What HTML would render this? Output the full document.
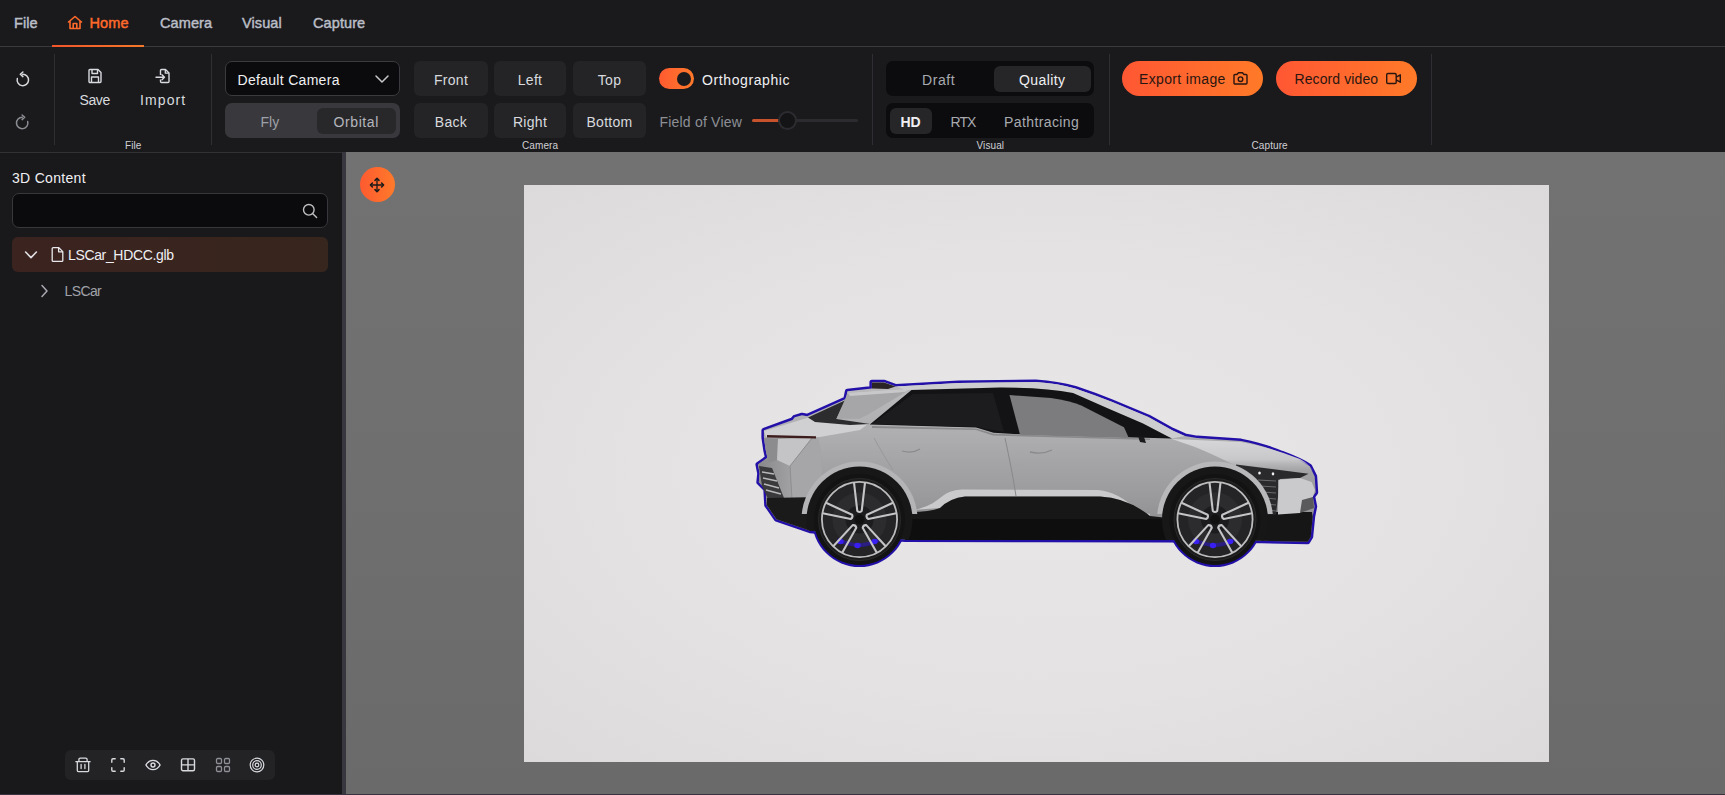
<!DOCTYPE html>
<html><head><meta charset="utf-8">
<style>
*{margin:0;padding:0;box-sizing:border-box}
html,body{width:1725px;height:795px;overflow:hidden;background:#1a1a1d;font-family:"Liberation Sans",sans-serif;}
.a{position:absolute}
.t{position:absolute;white-space:nowrap;line-height:1;font-size:14px;color:#d8dade}
.btn{position:absolute;background:#242427;border-radius:6px}
.sep{position:absolute;width:1px;background:#2f2f33}
.lbl{position:absolute;white-space:nowrap;line-height:1;font-size:10px;color:#d0d0d4}
svg{position:absolute;overflow:visible}
</style></head><body>
<!-- top menu -->
<div class="a" style="left:0;top:0;width:1725px;height:46px;background:#1a1a1d"></div>
<div class="a" style="left:0;top:46px;width:1725px;height:1px;background:#3a3a3e"></div>
<div class="a" style="left:52px;top:45px;width:92px;height:2px;background:linear-gradient(90deg,#f2552a,#f5792a)"></div>
<div class="t" style="left:14px;top:15.8px;font-size:14.5px;font-weight:normal;-webkit-text-stroke:0.45px #babec6;letter-spacing:0.1px;color:#babec6">File</div>
<svg style="left:67px;top:15px" width="16" height="15" viewBox="0 0 16 15"><path d="M1.5 7 L8 1.5 L14.5 7 M3 5.8 V13.5 H13 V5.8 M6.2 13.5 V8.5 H9.8 V13.5" fill="none" stroke="#ff6a2a" stroke-width="1.6" stroke-linejoin="round" stroke-linecap="round"/></svg>
<div class="t" style="left:89.5px;top:15.8px;font-size:14.5px;font-weight:normal;-webkit-text-stroke:0.45px #ff6a2a;letter-spacing:0.1px;color:#ff6a2a">Home</div>
<div class="t" style="left:160px;top:15.8px;font-size:14.5px;font-weight:normal;-webkit-text-stroke:0.45px #babec6;letter-spacing:0.1px;color:#babec6">Camera</div>
<div class="t" style="left:242px;top:15.8px;font-size:14.5px;font-weight:normal;-webkit-text-stroke:0.45px #babec6;letter-spacing:0.1px;color:#babec6">Visual</div>
<div class="t" style="left:313px;top:15.8px;font-size:14.5px;font-weight:normal;-webkit-text-stroke:0.45px #babec6;letter-spacing:0.1px;color:#babec6">Capture</div>

<!-- toolbar separators -->
<div class="sep" style="left:54px;top:54px;height:91px"></div>
<div class="sep" style="left:211px;top:54px;height:91px"></div>
<div class="sep" style="left:872px;top:54px;height:91px"></div>
<div class="sep" style="left:1109px;top:54px;height:91px"></div>
<div class="sep" style="left:1431px;top:54px;height:91px"></div>


<!-- undo/redo -->
<svg style="left:15px;top:71px" width="16" height="16" viewBox="0 0 16 16"><path d="M2.3 7.6 A5.7 5.7 0 1 0 7.7 3.3" fill="none" stroke="#d8dade" stroke-width="1.5" stroke-linecap="round"/><path d="M7.9 1 L5.3 3.3 L7.9 5.6" fill="none" stroke="#d8dade" stroke-width="1.5" stroke-linecap="round" stroke-linejoin="round"/></svg>
<svg style="left:13.5px;top:113.5px" width="16" height="16" viewBox="0 0 16 16"><g transform="translate(16,0) scale(-1,1)"><path d="M2.3 7.6 A5.7 5.7 0 1 0 7.7 3.3" fill="none" stroke="#8c8d92" stroke-width="1.5" stroke-linecap="round"/><path d="M7.9 1 L5.3 3.3 L7.9 5.6" fill="none" stroke="#8c8d92" stroke-width="1.5" stroke-linecap="round" stroke-linejoin="round"/></g></svg>
<!-- save / import -->
<svg style="left:87px;top:68px" width="16" height="16" viewBox="0 0 16 16"><path d="M2 2.5 A1 1 0 0 1 3 1.5 H11 L14 4.5 V13.5 A1 1 0 0 1 13 14.5 H3 A1 1 0 0 1 2 13.5 Z" fill="none" stroke="#d8dade" stroke-width="1.4" stroke-linejoin="round"/><path d="M5 1.8 V5.5 H10.5 V1.8 M4.5 14.2 V9 H11.5 V14.2" fill="none" stroke="#d8dade" stroke-width="1.4" stroke-linejoin="round"/></svg>
<div class="t" style="left:79.5px;top:93px;letter-spacing:-0.4px">Save</div>
<svg style="left:155px;top:68px" width="16" height="16" viewBox="0 0 16 16"><path d="M5.5 11.5 V13.5 A1 1 0 0 0 6.5 14.5 H13 A1 1 0 0 0 14 13.5 V5 L10.5 1.5 H6.5 A1 1 0 0 0 5.5 2.5 V7" fill="none" stroke="#d8dade" stroke-width="1.4" stroke-linejoin="round"/><path d="M10.3 1.8 V5.2 H13.8" fill="none" stroke="#d8dade" stroke-width="1.3" stroke-linejoin="round"/><path d="M1 9.3 H9.5 M7 6.8 L9.5 9.3 L7 11.8" fill="none" stroke="#d8dade" stroke-width="1.4" stroke-linecap="round" stroke-linejoin="round"/></svg>
<div class="t" style="left:140px;top:93px;letter-spacing:1.1px">Import</div>
<div class="lbl" style="left:125px;top:140.5px;letter-spacing:0.1px">File</div>

<!-- camera -->
<div class="a" style="left:225px;top:61px;width:175px;height:35px;background:#0b0b0d;border:1px solid #3a3a3f;border-radius:7px"></div>
<div class="t" style="left:237.5px;top:73px;letter-spacing:0.3px;color:#f0f0f2">Default Camera</div>
<svg style="left:374px;top:74px" width="16" height="10" viewBox="0 0 16 10"><path d="M2 2 L8 8 L14 2" fill="none" stroke="#c8c8cc" stroke-width="1.5" stroke-linecap="round" stroke-linejoin="round"/></svg>
<div class="a" style="left:225px;top:103px;width:175px;height:35px;background:#38383d;border-radius:7px"></div>
<div class="a" style="left:317px;top:108px;width:79px;height:26px;background:#28282b;border-radius:6px"></div>
<div class="t" style="left:260.5px;top:115px;color:#9fa1a8">Fly</div>
<div class="t" style="left:333.5px;top:115px;letter-spacing:0.6px;color:#b4b6bc">Orbital</div>

<div class="btn" style="left:414px;top:61px;width:74px;height:35px"></div>
<div class="btn" style="left:494px;top:61px;width:72px;height:35px"></div>
<div class="btn" style="left:573px;top:61px;width:73px;height:35px"></div>
<div class="btn" style="left:414px;top:103px;width:74px;height:35px"></div>
<div class="btn" style="left:494px;top:103px;width:72px;height:35px"></div>
<div class="btn" style="left:573px;top:103px;width:73px;height:35px"></div>
<div class="t" style="left:414px;width:74px;text-align:center;top:73px;letter-spacing:0.3px">Front</div>
<div class="t" style="left:494px;width:72px;text-align:center;top:73px;letter-spacing:0.3px">Left</div>
<div class="t" style="left:573px;width:73px;text-align:center;top:73px;letter-spacing:0.3px">Top</div>
<div class="t" style="left:414px;width:74px;text-align:center;top:115px;letter-spacing:0.3px">Back</div>
<div class="t" style="left:494px;width:72px;text-align:center;top:115px;letter-spacing:0.3px">Right</div>
<div class="t" style="left:573px;width:73px;text-align:center;top:115px;letter-spacing:0.3px">Bottom</div>
<div class="lbl" style="left:522px;top:140.5px;letter-spacing:0.1px">Camera</div>

<div class="a" style="left:659px;top:68px;width:35px;height:21px;border-radius:11px;background:linear-gradient(90deg,#ff5a30,#ff7a2a)"></div>
<div class="a" style="left:677px;top:71.5px;width:14px;height:14px;border-radius:50%;background:#1b1b1e"></div>
<div class="t" style="left:702px;top:73px;letter-spacing:0.6px;color:#f0f0f2">Orthographic</div>
<div class="t" style="left:659.5px;top:115px;letter-spacing:0.2px;color:#8e9096">Field of View</div>
<div class="a" style="left:752px;top:119px;width:106px;height:3px;border-radius:2px;background:#2c2c30"></div>
<div class="a" style="left:752px;top:119px;width:30px;height:3px;border-radius:2px;background:#c8522c"></div>
<div class="a" style="left:777.5px;top:111px;width:19px;height:19px;border-radius:50%;background:#141416;border:2px solid #2c2c30"></div>

<!-- visual -->
<div class="a" style="left:886px;top:61px;width:208px;height:35px;background:#0c0c0e;border-radius:7px"></div>
<div class="a" style="left:994px;top:66px;width:97px;height:26px;background:#262629;border-radius:6px"></div>
<div class="t" style="left:922px;top:73px;letter-spacing:0.6px;color:#a8aab0">Draft</div>
<div class="t" style="left:1019px;top:73px;letter-spacing:0.4px;color:#f0f0f2">Quality</div>
<div class="a" style="left:886px;top:103px;width:208px;height:35px;background:#0c0c0e;border-radius:7px"></div>
<div class="a" style="left:889.5px;top:108px;width:42px;height:26px;background:#262629;border-radius:6px"></div>
<div class="t" style="left:900.5px;top:115px;font-weight:bold;color:#f0f0f2">HD</div>
<div class="t" style="left:950.5px;top:115px;letter-spacing:-0.9px;color:#a8aab0">RTX</div>
<div class="t" style="left:1004px;top:115px;letter-spacing:0.4px;color:#a8aab0">Pathtracing</div>
<div class="lbl" style="left:976.5px;top:140.5px;letter-spacing:0.1px">Visual</div>

<!-- capture -->
<div class="a" style="left:1122px;top:61px;width:141px;height:35px;border-radius:18px;background:linear-gradient(90deg,#ff5733,#ff7a28)"></div>
<div class="t" style="left:1139px;top:72px;letter-spacing:0.35px;color:#2a1610">Export image</div>
<svg style="left:1232px;top:71px" width="17" height="15" viewBox="0 0 17 15"><path d="M2 4.5 A1 1 0 0 1 3 3.5 H5 L6.5 1.8 H10.5 L12 3.5 H14 A1 1 0 0 1 15 4.5 V12 A1 1 0 0 1 14 13 H3 A1 1 0 0 1 2 12 Z" fill="none" stroke="#2a1610" stroke-width="1.4" stroke-linejoin="round"/><circle cx="8.5" cy="8.2" r="2.3" fill="none" stroke="#2a1610" stroke-width="1.4"/></svg>
<div class="a" style="left:1276px;top:61px;width:141px;height:35px;border-radius:18px;background:linear-gradient(90deg,#ff5733,#ff7a28)"></div>
<div class="t" style="left:1294.5px;top:72px;letter-spacing:0.1px;color:#2a1610">Record video</div>
<svg style="left:1385px;top:71px" width="17" height="15" viewBox="0 0 17 15"><rect x="1.7" y="2.5" width="9.5" height="10" rx="1.3" fill="none" stroke="#2a1610" stroke-width="1.4"/><path d="M11.2 6.2 L15.3 3.8 V11.2 L11.2 8.8" fill="none" stroke="#2a1610" stroke-width="1.4" stroke-linejoin="round"/></svg>
<div class="lbl" style="left:1251.5px;top:140.5px;letter-spacing:0.1px">Capture</div>


<!-- left panel -->
<div class="a" style="left:0;top:152px;width:342px;height:642px;background:#19191c;border-top:1px solid #323236"></div>
<div class="a" style="left:342px;top:152px;width:4px;height:642px;background:#38363f"></div>


<div class="t" style="left:12px;top:170.5px;letter-spacing:0.3px;color:#f0f0f2">3D Content</div>
<div class="a" style="left:12px;top:193px;width:316px;height:35px;background:#0b0b0d;border:1px solid #38383c;border-radius:7px"></div>
<svg style="left:301px;top:202px" width="18" height="18" viewBox="0 0 18 18"><circle cx="7.8" cy="7.8" r="5.3" fill="none" stroke="#c0c0c4" stroke-width="1.4"/><path d="M11.8 11.8 L15.6 15.6" stroke="#c0c0c4" stroke-width="1.4" stroke-linecap="round"/></svg>
<div class="a" style="left:12px;top:237px;width:316px;height:35px;border-radius:6px;background:linear-gradient(90deg,#3b2320,#37261d)"></div>
<svg style="left:23px;top:249px" width="16" height="12" viewBox="0 0 16 12"><path d="M2.6 3 L8 8.6 L13.4 3" fill="none" stroke="#e0e0e4" stroke-width="1.6" stroke-linecap="round" stroke-linejoin="round"/></svg>
<svg style="left:50px;top:246px" width="15" height="17" viewBox="0 0 15 17"><path d="M2.2 2.6 A1 1 0 0 1 3.2 1.6 H8.8 L12.8 5.6 V14.4 A1 1 0 0 1 11.8 15.4 H3.2 A1 1 0 0 1 2.2 14.4 Z M8.6 1.8 V5.8 H12.6" fill="none" stroke="#e8e8ec" stroke-width="1.3" stroke-linejoin="round"/></svg>
<div class="t" style="left:68px;top:248px;letter-spacing:-0.35px;color:#f0f0f2">LSCar_HDCC.glb</div>
<svg style="left:38px;top:283px" width="12" height="16" viewBox="0 0 12 16"><path d="M4 2.5 L9 8 L4 13.5" fill="none" stroke="#a8aab0" stroke-width="1.5" stroke-linecap="round" stroke-linejoin="round"/></svg>
<div class="t" style="left:64.5px;top:283.5px;letter-spacing:-0.6px;color:#a0a2a8">LSCar</div>

<div class="a" style="left:65px;top:750px;width:210px;height:30px;background:#232326;border-radius:6px"></div>
<svg style="left:75px;top:757px" width="16" height="16" viewBox="0 0 16 16"><path d="M3.9 4.3 V2.4 A1.3 1.3 0 0 1 5.2 1.1 H10.8 A1.3 1.3 0 0 1 12.1 2.4 V4.3 M0.9 4.7 H15.1 M2.3 4.7 V13.5 A1.1 1.1 0 0 0 3.4 14.6 H12.6 A1.1 1.1 0 0 0 13.7 13.5 V4.7 M6.1 7.3 V11.6 M9.9 7.3 V11.6" fill="none" stroke="#d8dade" stroke-width="1.3" stroke-linecap="round" stroke-linejoin="round"/></svg>
<svg style="left:110px;top:757px" width="16" height="16" viewBox="0 0 16 16"><path d="M1.8 5.2 V3 A1.2 1.2 0 0 1 3 1.8 H5.2 M10.8 1.8 H13 A1.2 1.2 0 0 1 14.2 3 V5.2 M14.2 10.8 V13 A1.2 1.2 0 0 1 13 14.2 H10.8 M5.2 14.2 H3 A1.2 1.2 0 0 1 1.8 13 V10.8" fill="none" stroke="#d8dade" stroke-width="1.4" stroke-linecap="round" stroke-linejoin="round"/></svg>
<svg style="left:145px;top:757px" width="16" height="16" viewBox="0 0 16 16"><path d="M0.9 8 C3 4.2 5.4 3.4 8 3.4 C10.6 3.4 13 4.2 15.1 8 C13 11.8 10.6 12.6 8 12.6 C5.4 12.6 3 11.8 0.9 8 Z" fill="none" stroke="#d8dade" stroke-width="1.4" stroke-linejoin="round"/><circle cx="8" cy="8" r="2" fill="none" stroke="#d8dade" stroke-width="1.4"/></svg>
<svg style="left:180px;top:757px" width="16" height="16" viewBox="0 0 16 16"><rect x="1.5" y="1.9" width="13" height="11.9" rx="1.5" fill="none" stroke="#d8dade" stroke-width="1.4"/><path d="M8 1.9 V13.8 M1.5 7.85 H14.5" stroke="#d8dade" stroke-width="1.4"/></svg>
<svg style="left:215px;top:757px" width="16" height="16" viewBox="0 0 16 16"><rect x="1.5" y="1.5" width="5" height="5" rx="1.2" fill="none" stroke="#8e9096" stroke-width="1.3"/><rect x="9.5" y="1.5" width="5" height="5" rx="1.2" fill="none" stroke="#8e9096" stroke-width="1.3"/><rect x="1.5" y="9.5" width="5" height="5" rx="1.2" fill="none" stroke="#8e9096" stroke-width="1.3"/><rect x="9.5" y="9.5" width="5" height="5" rx="1.2" fill="none" stroke="#8e9096" stroke-width="1.3"/></svg>
<svg style="left:249px;top:757px" width="16" height="16" viewBox="0 0 16 16"><circle cx="8" cy="8" r="6.8" fill="none" stroke="#d8dade" stroke-width="1.2"/><circle cx="8" cy="8" r="4.3" fill="none" stroke="#d8dade" stroke-width="1.2"/><circle cx="8" cy="8" r="1.8" fill="none" stroke="#d8dade" stroke-width="1.2"/></svg>


<!-- viewport -->
<div class="a" style="left:346px;top:152px;width:1379px;height:642px;background:linear-gradient(180deg,#727272,#6f6f6f 50%,#6a6a6a)"></div>
<div class="a" style="left:0;top:794px;width:1725px;height:1px;background:#36323e"></div>
<div class="a" style="left:524px;top:185px;width:1025px;height:577px;background:radial-gradient(ellipse at 50% 50%,#e8e6e6 0%,#e4e2e2 55%,#dcdada 100%)"></div>


<div class="a" style="left:360px;top:167px;width:35px;height:35px;border-radius:50%;background:linear-gradient(90deg,#ff5a30,#ff7a2a)"></div>
<svg style="left:368px;top:175.5px" width="18" height="18" viewBox="0 0 18 18"><path d="M9 2.6 V15.4 M2.6 9 H15.4" stroke="#1a1a1a" stroke-width="1.3"/><path d="M7 4.4 L9 2.4 L11 4.4 M7 13.6 L9 15.6 L11 13.6 M4.4 7 L2.4 9 L4.4 11 M13.6 7 L15.6 9 L13.6 11" fill="none" stroke="#1a1a1a" stroke-width="1.5" stroke-linecap="round" stroke-linejoin="round"/></svg>


<svg id="car" style="left:0;top:0" width="1725" height="795" viewBox="0 0 1725 795">
<defs>
<linearGradient id="bodyg" x1="0" y1="380" x2="0" y2="540" gradientUnits="userSpaceOnUse">
<stop offset="0" stop-color="#bcbcbe"/><stop offset="0.38" stop-color="#acacae"/><stop offset="0.52" stop-color="#a4a4a6"/><stop offset="0.7" stop-color="#9c9c9e"/><stop offset="1" stop-color="#8a8a8c"/>
</linearGradient>
<linearGradient id="rearg" x1="760" y1="0" x2="830" y2="0" gradientUnits="userSpaceOnUse">
<stop offset="0" stop-color="#8a8a8c"/><stop offset="0.5" stop-color="#a4a4a6"/><stop offset="1" stop-color="#9c9c9e"/>
</linearGradient>
<clipPath id="topclip"><rect x="0" y="0" width="1725" height="514"/></clipPath>
<clipPath id="bodyclip"><path d="M776.4 519.2 L766.7 505 L765.8 489.3 L758.8 482.3 L759.7 473.4 L757.9 464.6 L767.4 457.8 L765.7 450 L763.9 437.6 L763.9 430.3 L792.6 419.9 L794.7 417.3 L802 415.2 L807.2 416.2 L845.8 399 L847.4 391.2 L871.9 388.6 L871.9 382.3 L884.4 382.3 L895.9 386.5 L958.7 383 L1035.7 382 Q1058 383.5 1075.2 388.4 Q1095 395 1111.7 401.8 L1148.3 417 L1172.6 430.4 L1184.8 435.9 L1197 438.1 L1241 441.1 Q1265 446 1281.5 453.2 Q1300 460 1309.7 466.3 L1314.7 476.4 L1315.7 492.4 L1312.7 496.5 L1314.7 506.5 L1312.7 516.6 L1310.7 536.7 L1307.7 541.8 L1261.4 540.7 L1168 540 L1040 539.7 L905 539.5 L810 530.7 Z"/></clipPath>
<linearGradient id="hoodg" x1="0" y1="440" x2="0" y2="472" gradientUnits="userSpaceOnUse"><stop offset="0" stop-color="#d6d6d8"/><stop offset="0.6" stop-color="#c8c8ca"/><stop offset="1" stop-color="#b4b4b6" stop-opacity="0"/></linearGradient>
</defs>
<path d="M776.4 519.2 L766.7 505 L765.8 489.3 L758.8 482.3 L759.7 473.4 L757.9 464.6 L767.4 457.8 L765.7 450 L763.9 437.6 L763.9 430.3 L792.6 419.9 L794.7 417.3 L802 415.2 L807.2 416.2 L845.8 399 L847.4 391.2 L871.9 388.6 L871.9 382.3 L884.4 382.3 L895.9 386.5 L958.7 383 L1035.7 382 Q1058 383.5 1075.2 388.4 Q1095 395 1111.7 401.8 L1148.3 417 L1172.6 430.4 L1184.8 435.9 L1197 438.1 L1241 441.1 Q1265 446 1281.5 453.2 Q1300 460 1309.7 466.3 L1314.7 476.4 L1315.7 492.4 L1312.7 496.5 L1314.7 506.5 L1312.7 516.6 L1310.7 536.7 L1307.7 541.8 L1261.4 540.7 L1168 540 L1040 539.7 L905 539.5 L810 530.7 Z" fill="#2210a8" stroke="#2210a8" stroke-width="5" stroke-linejoin="round"/>
<circle cx="859.5" cy="519.5" r="47.5" fill="#2210a8"/>
<circle cx="1215" cy="519.5" r="47.5" fill="#2210a8"/>
<path d="M776.4 519.2 L766.7 505 L765.8 489.3 L758.8 482.3 L759.7 473.4 L757.9 464.6 L767.4 457.8 L765.7 450 L763.9 437.6 L763.9 430.3 L792.6 419.9 L794.7 417.3 L802 415.2 L807.2 416.2 L845.8 399 L847.4 391.2 L871.9 388.6 L871.9 382.3 L884.4 382.3 L895.9 386.5 L958.7 383 L1035.7 382 Q1058 383.5 1075.2 388.4 Q1095 395 1111.7 401.8 L1148.3 417 L1172.6 430.4 L1184.8 435.9 L1197 438.1 L1241 441.1 Q1265 446 1281.5 453.2 Q1300 460 1309.7 466.3 L1314.7 476.4 L1315.7 492.4 L1312.7 496.5 L1314.7 506.5 L1312.7 516.6 L1310.7 536.7 L1307.7 541.8 L1261.4 540.7 L1168 540 L1040 539.7 L905 539.5 L810 530.7 Z" fill="url(#bodyg)"/>
<!-- spoiler -->
<path d="M872 388.6 L872 382.5 L884 382.5 L895.5 386.5 L888 389 Z" fill="#2a2426"/>
<!-- rear fascia -->
<path d="M764 438 L818 438 Q826 470 818 505 L776.4 519.2 L766.7 505 L765.8 489.3 L758.8 482.3 L759.7 473.4 L757.9 464.6 L767.4 457.8 L765.7 450 Z" fill="url(#rearg)"/>
<path d="M766 439 L778 439 L777 460 L768 463 Z" fill="#8c8c8e"/>
<path d="M778 439 L812 438 L790 466 L777 460 Z" fill="#c4c4c6"/>
<path d="M812 438 L790 466 L792 500 L818 500 Q826 470 818 438 Z" fill="#a6a6a8"/>
<path d="M812 438 L790 466 L792 500" fill="none" stroke="#8e8e90" stroke-width="1"/>
<path d="M759 466 L772 468 L784 498 L768 499 L762 486 Z" fill="#3a3a3c"/>
<path d="M762 472 L774 474 M763 478 L777 481 M764 484 L779 488 M766 490 L781 494" stroke="#b8b8ba" stroke-width="1.4"/>
<!-- rear deck highlight -->
<path d="M764 431 L807 418 L868 424 L860 430 L820 437 L766 437 Z" fill="#d0d0d2"/>
<path d="M767 435 L816 436.3 L816 438.6 L767 437.6 Z" fill="#3c1c1c"/>
<!-- rear glass dark -->
<path d="M808 417.5 L845.8 400 L836.4 419 L870 424 L850 425 L815 422 Z" fill="#2c2c2e"/>
<!-- C pillar fin -->
<path d="M847.9 392.7 L911.5 388.6 L867.7 414.7 L859.4 418.8 L836.4 418.8 Z" fill="#a6a6a8"/>
<path d="M847.9 392.7 L911.5 388.6 L905 392 L850 396 Z" fill="#c8c8ca"/>
<!-- roof highlight -->
<path d="M895.9 386.5 L958.7 383 L1035.7 382 Q1058 383.5 1075.2 388.4 Q1095 395 1111.7 401.8 L1148.3 417 L1172.6 430.4 L1184.8 435.9 L1172 438.5 L1165 435 L1143 423.5 L1107 408 L1073 393 Q1045 387.5 1000 387.6 L905 390 Z" fill="#cdcdcf"/>
<!-- window frame black -->
<path d="M869.8 424.5 L911.5 390 L1000 387.6 Q1045 387.5 1073 393 L1107 408 L1143 423.5 L1165 435 L1172 438.5 L1024 434.5 L993.5 432.8 L976 427.6 Z" fill="#131315"/>
<!-- rear side window -->
<path d="M872 424 L913 394 L993 393 L1004 432 L976 427 Z" fill="#1c1b1d"/>
<!-- front side window light -->
<path d="M1009.5 395 L1050.9 398.1 Q1070 401 1081.3 405.4 L1124 427.3 L1128.8 438 L1020 434.7 Z" fill="#7c7c7e"/>
<!-- sill line -->
<path d="M872 426 L976 428.5 L993.5 433.8 L1150 438.5 L1150 440 L993 435.5 L976 430 L872 428 Z" fill="#8a8a8c"/>
<!-- mirror -->
<path d="M1138 436 L1144 437 L1146 443 L1140 442 Z" fill="#1a1a1c"/>
<!-- hood/front -->
<path d="M1172 439 L1241 442 Q1270 447 1300 459 Q1310 464 1315 474 L1240 468 Q1215 455 1195 447 Z" fill="url(#hoodg)"/>
<!-- shoulder highlight -->

<!-- lower door blade -->
<path d="M912 510 Q928 508 940 498 Q948 490 962 489.5 L1098 490 Q1120 492 1138 512 L1150 514 L1150 516 Q1128 498 1100 496.5 L965 496.5 Q950 498 940 508 Z" fill="#cacacc"/>
<!-- black skirt -->
<path d="M905 539.5 L910 512 Q930 512 940 508 Q950 498 965 496.5 L1100 496.5 Q1128 498 1150 516 L1168 518 L1168 540 L1040 539.7 Z" fill="#171718"/>
<path d="M905 519 L1168 519 L1168 540 L905 540 Z" fill="#0e0e0f"/>
<!-- rear lower black -->
<path d="M776.4 519.2 L766.7 505 L767 498 L820 497 L824 531 L810 530.7 Z" fill="#1a1a1b"/>
<!-- front lower black -->
<path d="M1258 512 L1312 512 L1312.7 516.6 L1310.7 536.7 L1307.7 541.8 L1261.4 540.7 Z" fill="#161617"/>
<!-- front grille -->
<path d="M1236 464.5 L1308.5 473.8 L1300 478 L1280 479 L1276 514.6 L1266 514.6 Q1258 488 1236 470 Z" fill="#2a2a2c"/>
<path d="M1258 480 L1276 481 M1260 486 L1276 487 M1262 492 L1276 493 M1264 498 L1276 499 M1266 504 L1276 505 M1268 510 L1276 511" stroke="#6a6a6c" stroke-width="1"/>
<ellipse cx="1259.5" cy="473" rx="1.3" ry="1.6" fill="#f0f0f0"/>
<ellipse cx="1273" cy="473.8" rx="1.3" ry="1.6" fill="#f0f0f0"/>
<path d="M1278.3 479.8 L1300 478 L1311.6 482 L1315 490 L1313 496.5 L1300 513 L1278 514.6 Z" fill="#cacacc"/>
<path d="M1302 500 L1313 497 L1314 508 L1300 513 Z" fill="#5a5a5c"/>
<!-- arches: silver band + black well -->
<g clip-path="url(#bodyclip)">
<g clip-path="url(#topclip)">
<circle cx="859.5" cy="519.5" r="58" fill="#b4b4b6"/>
<circle cx="1215" cy="519.5" r="58" fill="#b8b8ba"/>
</g>
<circle cx="859.5" cy="519.5" r="53" fill="#171718"/>
<circle cx="1215" cy="519.5" r="53" fill="#171718"/>
</g>
<rect x="800" y="540" width="120" height="40" fill="none"/>
<circle cx="859.5" cy="519.5" r="45.5" fill="#131313"/>
<circle cx="859.5" cy="519.5" r="41" fill="#1b1b1b" stroke="#2a2a2a" stroke-width="1"/>
<circle cx="859.5" cy="519.5" r="37.6" fill="#242426" stroke="#bcbcbe" stroke-width="1.8"/>
<circle cx="859.5" cy="519.5" r="27" fill="#2c2c2e"/>
<circle cx="859.5" cy="519.5" r="14" fill="#1c1c1e"/>
<path d="M837.5 539.5 Q859.5 550.5 879.5 539.5" fill="none" stroke="#2a14c8" stroke-width="4" opacity="0.55"/>
<ellipse cx="840.5" cy="541.5" rx="3.2" ry="2.8" fill="#3a20f0"/>
<ellipse cx="857.5" cy="545.5" rx="3.2" ry="2.8" fill="#3a20f0"/>
<ellipse cx="874.5" cy="541.5" rx="3.2" ry="2.8" fill="#3a20f0"/>
<path d="M865.0 482.5 L861.7 511.0 Q859.5 513.0 857.3 511.0 L854.0 482.5" fill="none" stroke="#c4c4c6" stroke-width="2.1" stroke-linejoin="round"/>
<path d="M896.4 513.3 L868.3 519.0 Q865.7 517.5 866.9 514.8 L893.0 502.8" fill="none" stroke="#c4c4c6" stroke-width="2.1" stroke-linejoin="round"/>
<path d="M876.8 552.7 L862.7 527.7 Q863.3 524.8 866.3 525.1 L885.7 546.2" fill="none" stroke="#c4c4c6" stroke-width="2.1" stroke-linejoin="round"/>
<path d="M833.3 546.2 L852.7 525.1 Q855.7 524.8 856.3 527.7 L842.2 552.7" fill="none" stroke="#c4c4c6" stroke-width="2.1" stroke-linejoin="round"/>
<path d="M826.0 502.8 L852.1 514.8 Q853.3 517.5 850.7 519.0 L822.6 513.3" fill="none" stroke="#c4c4c6" stroke-width="2.1" stroke-linejoin="round"/>
<circle cx="859.5" cy="519.5" r="5" fill="#111"/>
<circle cx="1215" cy="519.5" r="45.5" fill="#131313"/>
<circle cx="1215" cy="519.5" r="41" fill="#1b1b1b" stroke="#2a2a2a" stroke-width="1"/>
<circle cx="1215" cy="519.5" r="37.6" fill="#242426" stroke="#bcbcbe" stroke-width="1.8"/>
<circle cx="1215" cy="519.5" r="27" fill="#2c2c2e"/>
<circle cx="1215" cy="519.5" r="14" fill="#1c1c1e"/>
<path d="M1193 539.5 Q1215 550.5 1235 539.5" fill="none" stroke="#2a14c8" stroke-width="4" opacity="0.55"/>
<ellipse cx="1196" cy="541.5" rx="3.2" ry="2.8" fill="#3a20f0"/>
<ellipse cx="1213" cy="545.5" rx="3.2" ry="2.8" fill="#3a20f0"/>
<ellipse cx="1230" cy="541.5" rx="3.2" ry="2.8" fill="#3a20f0"/>
<path d="M1220.5 482.5 L1217.2 511.0 Q1215.0 513.0 1212.8 511.0 L1209.5 482.5" fill="none" stroke="#c4c4c6" stroke-width="2.1" stroke-linejoin="round"/>
<path d="M1251.9 513.3 L1223.8 519.0 Q1221.2 517.5 1222.4 514.8 L1248.5 502.8" fill="none" stroke="#c4c4c6" stroke-width="2.1" stroke-linejoin="round"/>
<path d="M1232.3 552.7 L1218.2 527.7 Q1218.8 524.8 1221.8 525.1 L1241.2 546.2" fill="none" stroke="#c4c4c6" stroke-width="2.1" stroke-linejoin="round"/>
<path d="M1188.8 546.2 L1208.2 525.1 Q1211.2 524.8 1211.8 527.7 L1197.7 552.7" fill="none" stroke="#c4c4c6" stroke-width="2.1" stroke-linejoin="round"/>
<path d="M1181.5 502.8 L1207.6 514.8 Q1208.8 517.5 1206.2 519.0 L1178.1 513.3" fill="none" stroke="#c4c4c6" stroke-width="2.1" stroke-linejoin="round"/>
<circle cx="1215" cy="519.5" r="5" fill="#111"/>
<!-- door lines + handles -->
<path d="M1005 438 Q1012 470 1016 496" fill="none" stroke="#88888a" stroke-width="1"/>
<path d="M874 438 Q885 458 893 470" fill="none" stroke="#98989a" stroke-width="1"/>
<path d="M902 451 Q912 454 920 449" fill="none" stroke="#8a8a8c" stroke-width="1.3"/>
<path d="M1030 452 Q1042 455 1052 450" fill="none" stroke="#8a8a8c" stroke-width="1.3"/>
</svg>

</body></html>
